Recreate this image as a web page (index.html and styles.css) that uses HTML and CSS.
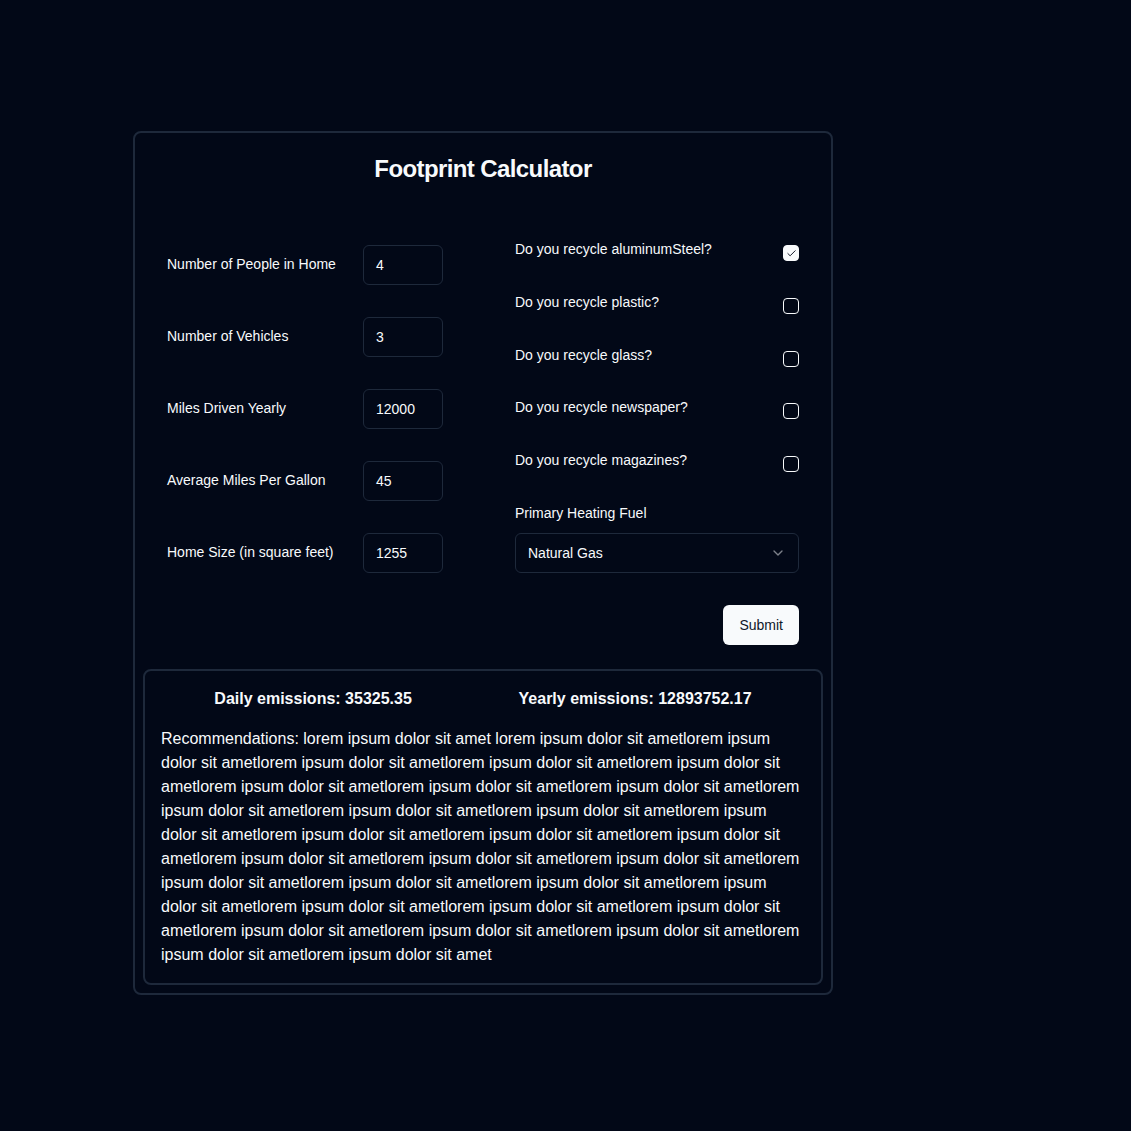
FILE: index.html
```html
<!DOCTYPE html>
<html lang="en">
<head>
<meta charset="utf-8">
<title>Footprint Calculator</title>
<link rel="stylesheet" href="styles.css">
</head>
<body>
<div class="page">
  <div class="card">
    <div class="form-area">
      <h1 class="title">Footprint Calculator</h1>
      <div class="grid">
        <div class="col-left">
          <div class="field"><label class="flabel">Number of People in Home</label><div class="input">4</div></div>
          <div class="field"><label class="flabel">Number of Vehicles</label><div class="input">3</div></div>
          <div class="field"><label class="flabel">Miles Driven Yearly</label><div class="input">12000</div></div>
          <div class="field"><label class="flabel">Average Miles Per Gallon</label><div class="input">45</div></div>
          <div class="field"><label class="flabel">Home Size (in square feet)</label><div class="input">1255</div></div>
        </div>
        <div class="col-right">
          <div class="check-row"><span class="clabel">Do you recycle aluminumSteel?</span><span class="checkbox checked"><svg width="11" height="11" viewBox="0 0 24 24" fill="none" stroke="#020817" stroke-width="2" stroke-linecap="round" stroke-linejoin="round"><path d="M20 6 9 17l-5-5"/></svg></span></div>
          <div class="check-row"><span class="clabel">Do you recycle plastic?</span><span class="checkbox"></span></div>
          <div class="check-row"><span class="clabel">Do you recycle glass?</span><span class="checkbox"></span></div>
          <div class="check-row"><span class="clabel">Do you recycle newspaper?</span><span class="checkbox"></span></div>
          <div class="check-row"><span class="clabel">Do you recycle magazines?</span><span class="checkbox"></span></div>
          <div class="select-label">Primary Heating Fuel</div>
          <div class="select"><span>Natural Gas</span><svg class="chev" width="16" height="16" viewBox="0 0 24 24" fill="none" stroke="#f8fafc" stroke-width="2" stroke-linecap="round" stroke-linejoin="round"><path d="m6 9 6 6 6-6"/></svg></div>
        </div>
      </div>
      <div class="actions"><button class="submit">Submit</button></div>
    </div>
    <div class="results">
      <div class="emissions">
        <span>Daily emissions: 35325.35</span>
        <span>Yearly emissions: 12893752.17</span>
      </div>
      <p class="recs">Recommendations: lorem ipsum dolor sit amet lorem ipsum dolor sit ametlorem ipsum dolor sit ametlorem ipsum dolor sit ametlorem ipsum dolor sit ametlorem ipsum dolor sit ametlorem ipsum dolor sit ametlorem ipsum dolor sit ametlorem ipsum dolor sit ametlorem ipsum dolor sit ametlorem ipsum dolor sit ametlorem ipsum dolor sit ametlorem ipsum dolor sit ametlorem ipsum dolor sit ametlorem ipsum dolor sit ametlorem ipsum dolor sit ametlorem ipsum dolor sit ametlorem ipsum dolor sit ametlorem ipsum dolor sit ametlorem ipsum dolor sit ametlorem ipsum dolor sit ametlorem ipsum dolor sit ametlorem ipsum dolor sit ametlorem ipsum dolor sit ametlorem ipsum dolor sit ametlorem ipsum dolor sit ametlorem ipsum dolor sit ametlorem ipsum dolor sit ametlorem ipsum dolor sit ametlorem ipsum dolor sit ametlorem ipsum dolor sit amet</p>
    </div>
  </div>
</div>
</body>
</html>
```

FILE: styles.css
```css
* { box-sizing: border-box; }
html, body {
  margin: 0;
  background: #020817;
  color: #f8fafc;
  font-family: "Liberation Sans", Arial, sans-serif;
}
.page {
  padding: 131px 0 100px 133px;
}
.card {
  width: 700px;
  border: 2px solid #1e293b;
  border-radius: 8px;
  padding: 8px;
}
.form-area {
  padding: 16px 24px 24px 24px;
}
.title {
  margin: 0;
  text-align: center;
  font-size: 24px;
  line-height: 24px;
  font-weight: 700;
  letter-spacing: -0.6px;
}
.grid {
  display: flex;
  justify-content: space-between;
  margin-top: 58px;
}
.col-left {
  display: flex;
  flex-direction: column;
  gap: 32px;
  padding-top: 6px;
}
.field {
  display: flex;
  align-items: center;
  height: 40px;
}
.flabel {
  width: 196px;
  font-size: 14px;
  line-height: 14px;
  margin-top: -2px;
}
.input {
  width: 80px;
  height: 40px;
  border: 1px solid #1e293b;
  border-radius: 6px;
  padding: 0 12px;
  font-size: 14px;
  line-height: 38px;
}
.col-right {
  width: 284px;
  display: flex;
  flex-direction: column;
}
.check-row {
  display: flex;
  justify-content: space-between;
  align-items: flex-start;
  height: 52.75px;
}
.clabel {
  font-size: 14px;
  line-height: 20px;
}
.checkbox {
  width: 16px;
  height: 16px;
  margin-top: 6px;
  border: 1px solid #f8fafc;
  border-radius: 4px;
  display: flex;
  align-items: center;
  justify-content: center;
}
.checkbox.checked {
  background: #f8fafc;
}
.select-label {
  font-size: 14px;
  line-height: 20px;
}
.select {
  margin-top: 10px;
  height: 40px;
  border: 1px solid #1e293b;
  border-radius: 6px;
  padding: 0 12px;
  display: flex;
  align-items: center;
  justify-content: space-between;
  font-size: 14px;
}
.chev { opacity: 0.5; }
.actions {
  display: flex;
  justify-content: flex-end;
  margin-top: 32px;
}
.submit {
  height: 40px;
  padding: 0 16px;
  border: none;
  border-radius: 6px;
  background: #f8fafc;
  color: #0f172a;
  font-family: "Liberation Sans", Arial, sans-serif;
  font-size: 14px;
  font-weight: 500;
}
.results {
  border: 2px solid #1e293b;
  border-radius: 8px;
  padding: 16px 16px 16px 16px;
}
.emissions {
  display: flex;
  justify-content: space-around;
  font-size: 16px;
  line-height: 24px;
  font-weight: 700;
}
.recs {
  margin: 16px 0 0 0;
  font-size: 16px;
  line-height: 24px;
}
```
